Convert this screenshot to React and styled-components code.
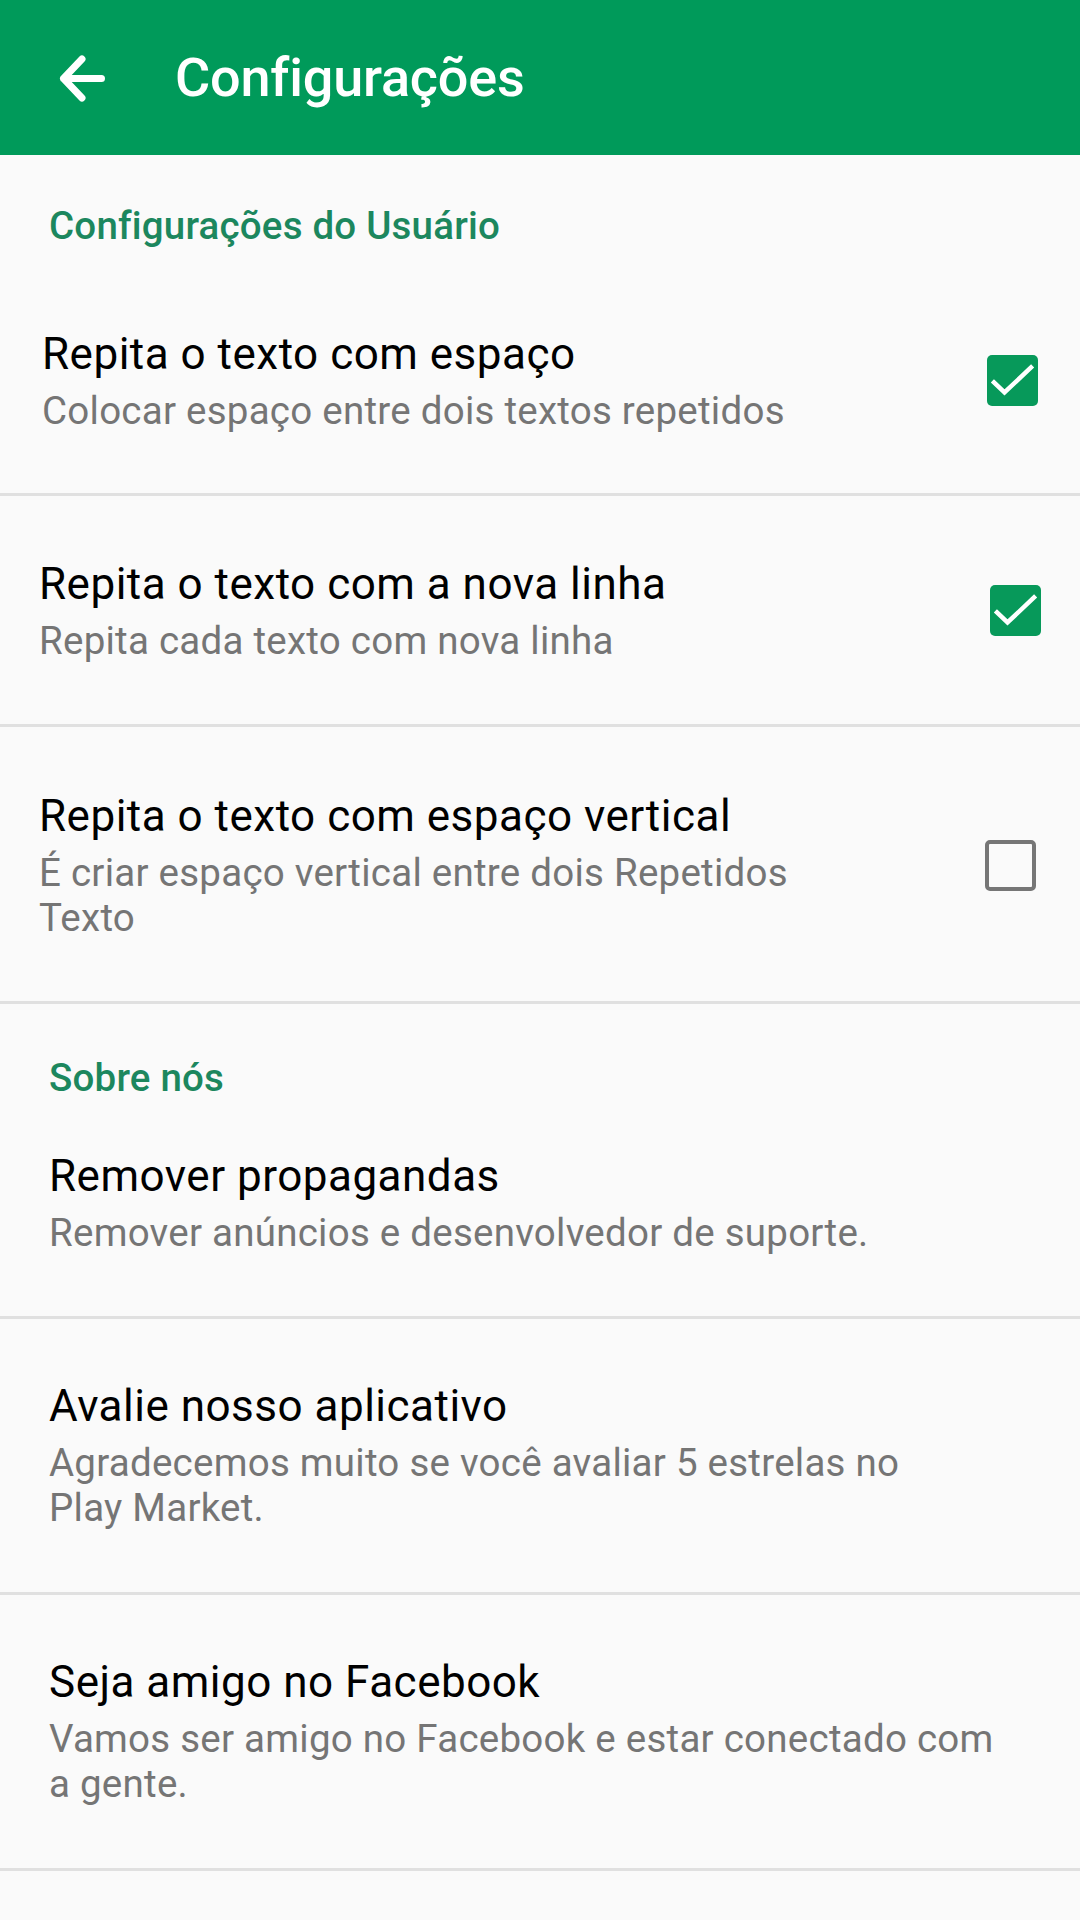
import React from "react";
import styled, { createGlobalStyle } from "styled-components";

const Global = createGlobalStyle`
  html, body {
    margin: 0;
    padding: 0;
    background: #fafafa;
  }
  body {
    font-family: Roboto, "Noto Sans", "Liberation Sans", sans-serif;
    -webkit-font-smoothing: antialiased;
  }
`;

const Screen = styled.div`
  width: 1080px;
  min-height: 1920px;
  background: #fafafa;
  display: flex;
  flex-direction: column;
`;

const Toolbar = styled.header`
  height: 155px;
  background: #009a5a;
  display: flex;
  align-items: center;
  padding-left: 58px;
  box-sizing: border-box;
`;

const BackButton = styled.button`
  width: 50px;
  height: 50px;
  padding: 0;
  margin: 0;
  border: 0;
  background: transparent;
  display: flex;
  align-items: center;
  justify-content: center;
  cursor: pointer;
`;

const ToolbarTitle = styled.h1`
  margin: 0 0 0 67px;
  font-family: Roboto, "Noto Sans", sans-serif;
  font-weight: 500;
  font-size: 54px;
  color: #ffffff;
  line-height: normal;
  letter-spacing: -0.2px;
`;

const SectionTitle = styled.div`
  margin-top: ${(p) => p.$top}px;
  padding-left: 49px;
  font-family: Roboto, "Noto Sans", sans-serif;
  font-weight: 500;
  font-size: 38.5px;
  line-height: 45px;
  letter-spacing: 0.2px;
  color: #1c875e;
`;

const Row = styled.div`
  display: flex;
  align-items: center;
  gap: 24px;
  padding: ${(p) => p.$pt ?? 62}px ${(p) => p.$pr}px ${(p) => p.$pb ?? 62}px
    ${(p) => p.$pl}px;
  border-bottom: 3px solid #e0e0e0;
`;

const TextCol = styled.div`
  flex: 1;
  min-width: 0;
  display: flex;
  flex-direction: column;
  gap: 8px;
`;

const Title = styled.div`
  font-size: 44px;
  line-height: 52px;
  letter-spacing: 0.5px;
  color: #000000;
  font-weight: 400;
`;

const Summary = styled.div`
  font-size: 38.5px;
  line-height: 45px;
  letter-spacing: 0.25px;
  color: #757575;
  font-weight: 400;
`;

const Box = styled.div`
  width: 51px;
  height: 51px;
  box-sizing: border-box;
  border-radius: 5px;
  flex: none;
  background: ${(p) => (p.$checked ? "#07995a" : "transparent")};
  border: ${(p) => (p.$checked ? "none" : "4.5px solid #767676")};
  display: flex;
  align-items: center;
  justify-content: center;
`;

const ArrowIcon = () => (
  <svg width="50" height="50" viewBox="0 0 50 50" fill="none">
    <path
      d="M43.5 25.5H5.5M24 6L5.5 25.5L24 45"
      stroke="#ffffff"
      strokeWidth="7"
      strokeLinecap="round"
      strokeLinejoin="round"
    />
  </svg>
);

const Check = ({ checked }) => (
  <Box $checked={checked}>
    {checked && (
      <svg width="51" height="51" viewBox="0 0 51 51" fill="none">
        <polyline
          points="7,27.5 17.5,37.5 44,12.5"
          stroke="#ffffff"
          strokeWidth="4.5"
          strokeLinecap="square"
          strokeLinejoin="miter"
        />
      </svg>
    )}
  </Box>
);

const Pref = ({ title, lines, checked, pl, pr, pt, pb }) => (
  <Row $pl={pl} $pr={pr} $pt={pt} $pb={pb}>
    <TextCol>
      <Title>{title}</Title>
      <Summary>
        {lines.map((l, i) => (
          <React.Fragment key={i}>
            {i > 0 && <br />}
            {l}
          </React.Fragment>
        ))}
      </Summary>
    </TextCol>
    {checked !== undefined && <Check checked={checked} />}
  </Row>
);

export default function App() {
  return (
    <Screen>
      <Global />
      <Toolbar>
        <BackButton aria-label="Voltar">
          <ArrowIcon />
        </BackButton>
        <ToolbarTitle>Configurações</ToolbarTitle>
      </Toolbar>

      <SectionTitle $top={48}>Configurações do Usuário</SectionTitle>
      <Pref
        title="Repita o texto com espaço"
        lines={["Colocar espaço entre dois textos repetidos"]}
        checked={true}
        pl={42}
        pr={42}
        pt={80}
        pb={60}
      />
      <Pref
        title="Repita o texto com a nova linha"
        lines={["Repita cada texto com nova linha"]}
        checked={true}
        pl={39}
        pr={39}
        pt={62}
        pb={61}
      />
      <Pref
        title="Repita o texto com espaço vertical"
        lines={["É criar espaço vertical entre dois Repetidos", "Texto"]}
        checked={false}
        pl={39}
        pr={44}
        pt={63}
        pb={61}
      />

      <SectionTitle $top={51}>Sobre nós</SectionTitle>
      <Pref
        title="Remover propagandas"
        lines={["Remover anúncios e desenvolvedor de suporte."]}
        pl={49}
        pr={46}
        pt={50}
        pb={61}
      />
      <Pref
        title="Avalie nosso aplicativo"
        lines={["Agradecemos muito se você avaliar 5 estrelas no", "Play Market."]}
        pl={49}
        pr={46}
        pt={61}
        pb={62}
      />
      <Pref
        title="Seja amigo no Facebook"
        lines={["Vamos ser amigo no Facebook e estar conectado com", "a gente."]}
        pl={49}
        pr={46}
        pt={61}
        pb={62}
      />
    </Screen>
  );
}
